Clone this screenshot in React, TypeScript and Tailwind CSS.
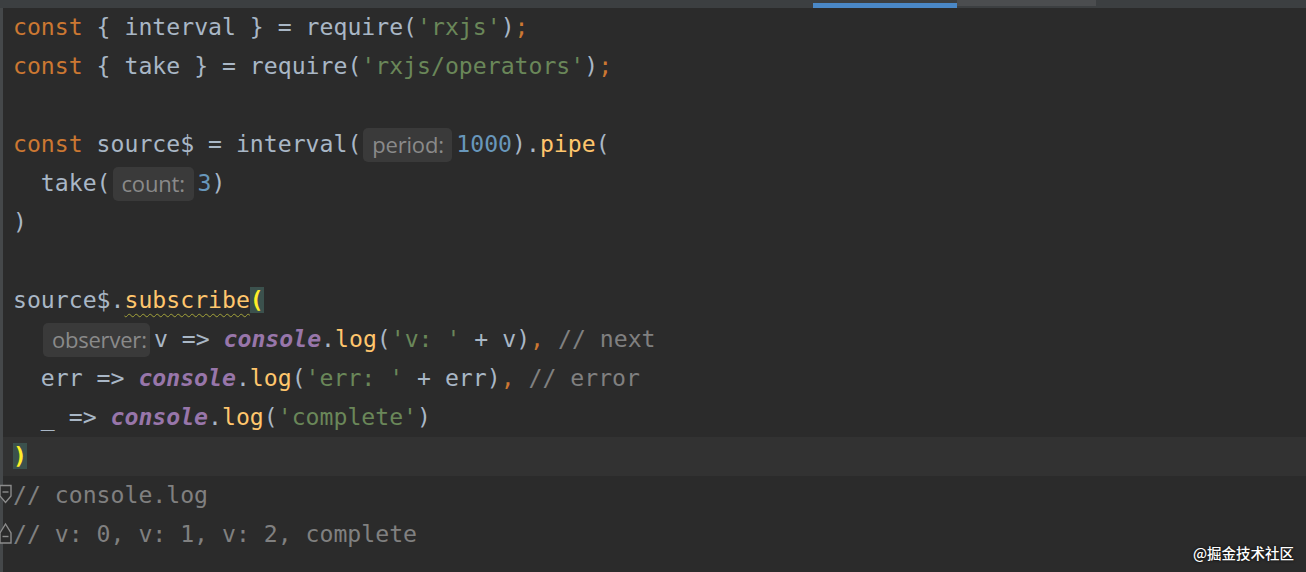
import React from 'react';

// Darcula-ish token colours
const kw = 'text-[#cc7832]';
const str = 'text-[#6a8759]';
const num = 'text-[#6897bb]';
const fn = 'text-[#ffc66d]';
const cmt = 'text-[#808080]';
const con = 'text-[#9876aa] font-bold italic';

const Hint: React.FC<{ label: string; width: string }> = ({ label, width }) => (
  <span
    className={`inline-flex items-center h-[34px] ml-[2px] mr-[4px] rounded-[5px] bg-[#3a3a3a] pl-[9px] pb-[3px] leading-none text-[#8a8a8a] text-[22px] font-['Open_Sans',sans-serif] tracking-[-0.2px] align-middle ${width}`}
  >
    {label}
  </span>
);

const Line: React.FC<{ children?: React.ReactNode; current?: boolean; fold?: 'start' | 'end' }> = ({
  children,
  current,
  fold,
}) => (
  <div className={`relative h-[39px] flex items-center pl-[10px] ${current ? 'bg-[#323232]' : ''}`}>
    {fold === 'start' && (
      <svg className="absolute -left-[4px] top-[8px]" width="15" height="21" viewBox="0 0 15 21">
        <path d="M1 1.5 H12 V12 L6.5 18.5 L1 12 Z" fill="#2b2b2b" stroke="#8c8c8c" strokeWidth="1.4" />
        <path d="M3.5 8 H9.5" stroke="#8c8c8c" strokeWidth="1.4" />
      </svg>
    )}
    {fold === 'end' && (
      <svg className="absolute -left-[4px] top-[6px]" width="15" height="24" viewBox="0 0 15 24">
        <path d="M1 22 H12 V12 L6.5 3 L1 12 Z" fill="#2b2b2b" stroke="#8c8c8c" strokeWidth="1.4" />
        <path d="M3.5 15.5 H9.5" stroke="#8c8c8c" strokeWidth="1.4" />
      </svg>
    )}
    <span className="whitespace-pre">{children}</span>
  </div>
);

export default function App() {
  return (
    <div className="w-full h-[572px] bg-[#2b2b2b] overflow-hidden relative font-['DejaVu_Sans_Mono',monospace] text-[23.15px] text-[#a9b7c6]">
      {/* tab strip */}
      <div className="h-2 bg-[#3c3f41] flex">
        <div className="w-[813px]" />
        <div className="w-[144px] mt-[3px] h-[5px] bg-[#4a88c7]" />
        <div className="w-[139px] h-[6px] bg-[#4b4d4f]" />
      </div>

      <div className="border-l-[3px] border-[#45484a] h-full">
        <Line>
          <span className={kw}>const</span>
          {' { interval } = require('}
          <span className={str}>'rxjs'</span>
          {')'}
          <span className={kw}>;</span>
        </Line>
        <Line>
          <span className={kw}>const</span>
          {' { take } = require('}
          <span className={str}>'rxjs/operators'</span>
          {')'}
          <span className={kw}>;</span>
        </Line>
        <Line />
        <Line>
          <span className={kw}>const</span>
          {' source$ = interval('}
          <Hint label="period:" width="w-[89px]" />
          <span className={num}>1000</span>
          {').'}
          <span className={fn}>pipe</span>
          {'('}
        </Line>
        <Line>
          {'  take('}
          <Hint label="count:" width="w-[81px]" />
          <span className={num}>3</span>
          {')'}
        </Line>
        <Line>{')'}</Line>
        <Line />
        <Line>
          {'source$.'}
          <span className={`${fn} underline decoration-wavy decoration-[#a3a33a] decoration-1 underline-offset-[5px]`}>
            subscribe
          </span>
          <span className="bg-[#3b514d] text-[#ffef28] font-bold">(</span>
        </Line>
        <Line>
          {'  '}
          <Hint label="observer:" width="w-[107px]" />
          {'v => '}
          <span className={con}>console</span>
          {'.'}
          <span className={fn}>log</span>
          {'('}
          <span className={str}>'v: '</span>
          {' + v)'}
          <span className={kw}>,</span>
          {' '}
          <span className={cmt}>// next</span>
        </Line>
        <Line>
          {'  err => '}
          <span className={con}>console</span>
          {'.'}
          <span className={fn}>log</span>
          {'('}
          <span className={str}>'err: '</span>
          {' + err)'}
          <span className={kw}>,</span>
          {' '}
          <span className={cmt}>// error</span>
        </Line>
        <Line>
          {'  _ => '}
          <span className={con}>console</span>
          {'.'}
          <span className={fn}>log</span>
          {'('}
          <span className={str}>'complete'</span>
          {')'}
        </Line>
        <Line current>
          <span className="bg-[#3b514d] text-[#ffef28] font-bold">)</span>
        </Line>
        <Line fold="start">
          <span className={cmt}>// console.log</span>
        </Line>
        <Line fold="end">
          <span className={cmt}>// v: 0, v: 1, v: 2, complete</span>
        </Line>
      </div>

      {/* watermark */}
      <div className="absolute right-[12px] bottom-[8px] text-white text-[14.5px] font-medium font-['Noto_Sans_CJK_SC',sans-serif] [text-shadow:0_0_3px_#000]">
        @掘金技术社区
      </div>
    </div>
  );
}
